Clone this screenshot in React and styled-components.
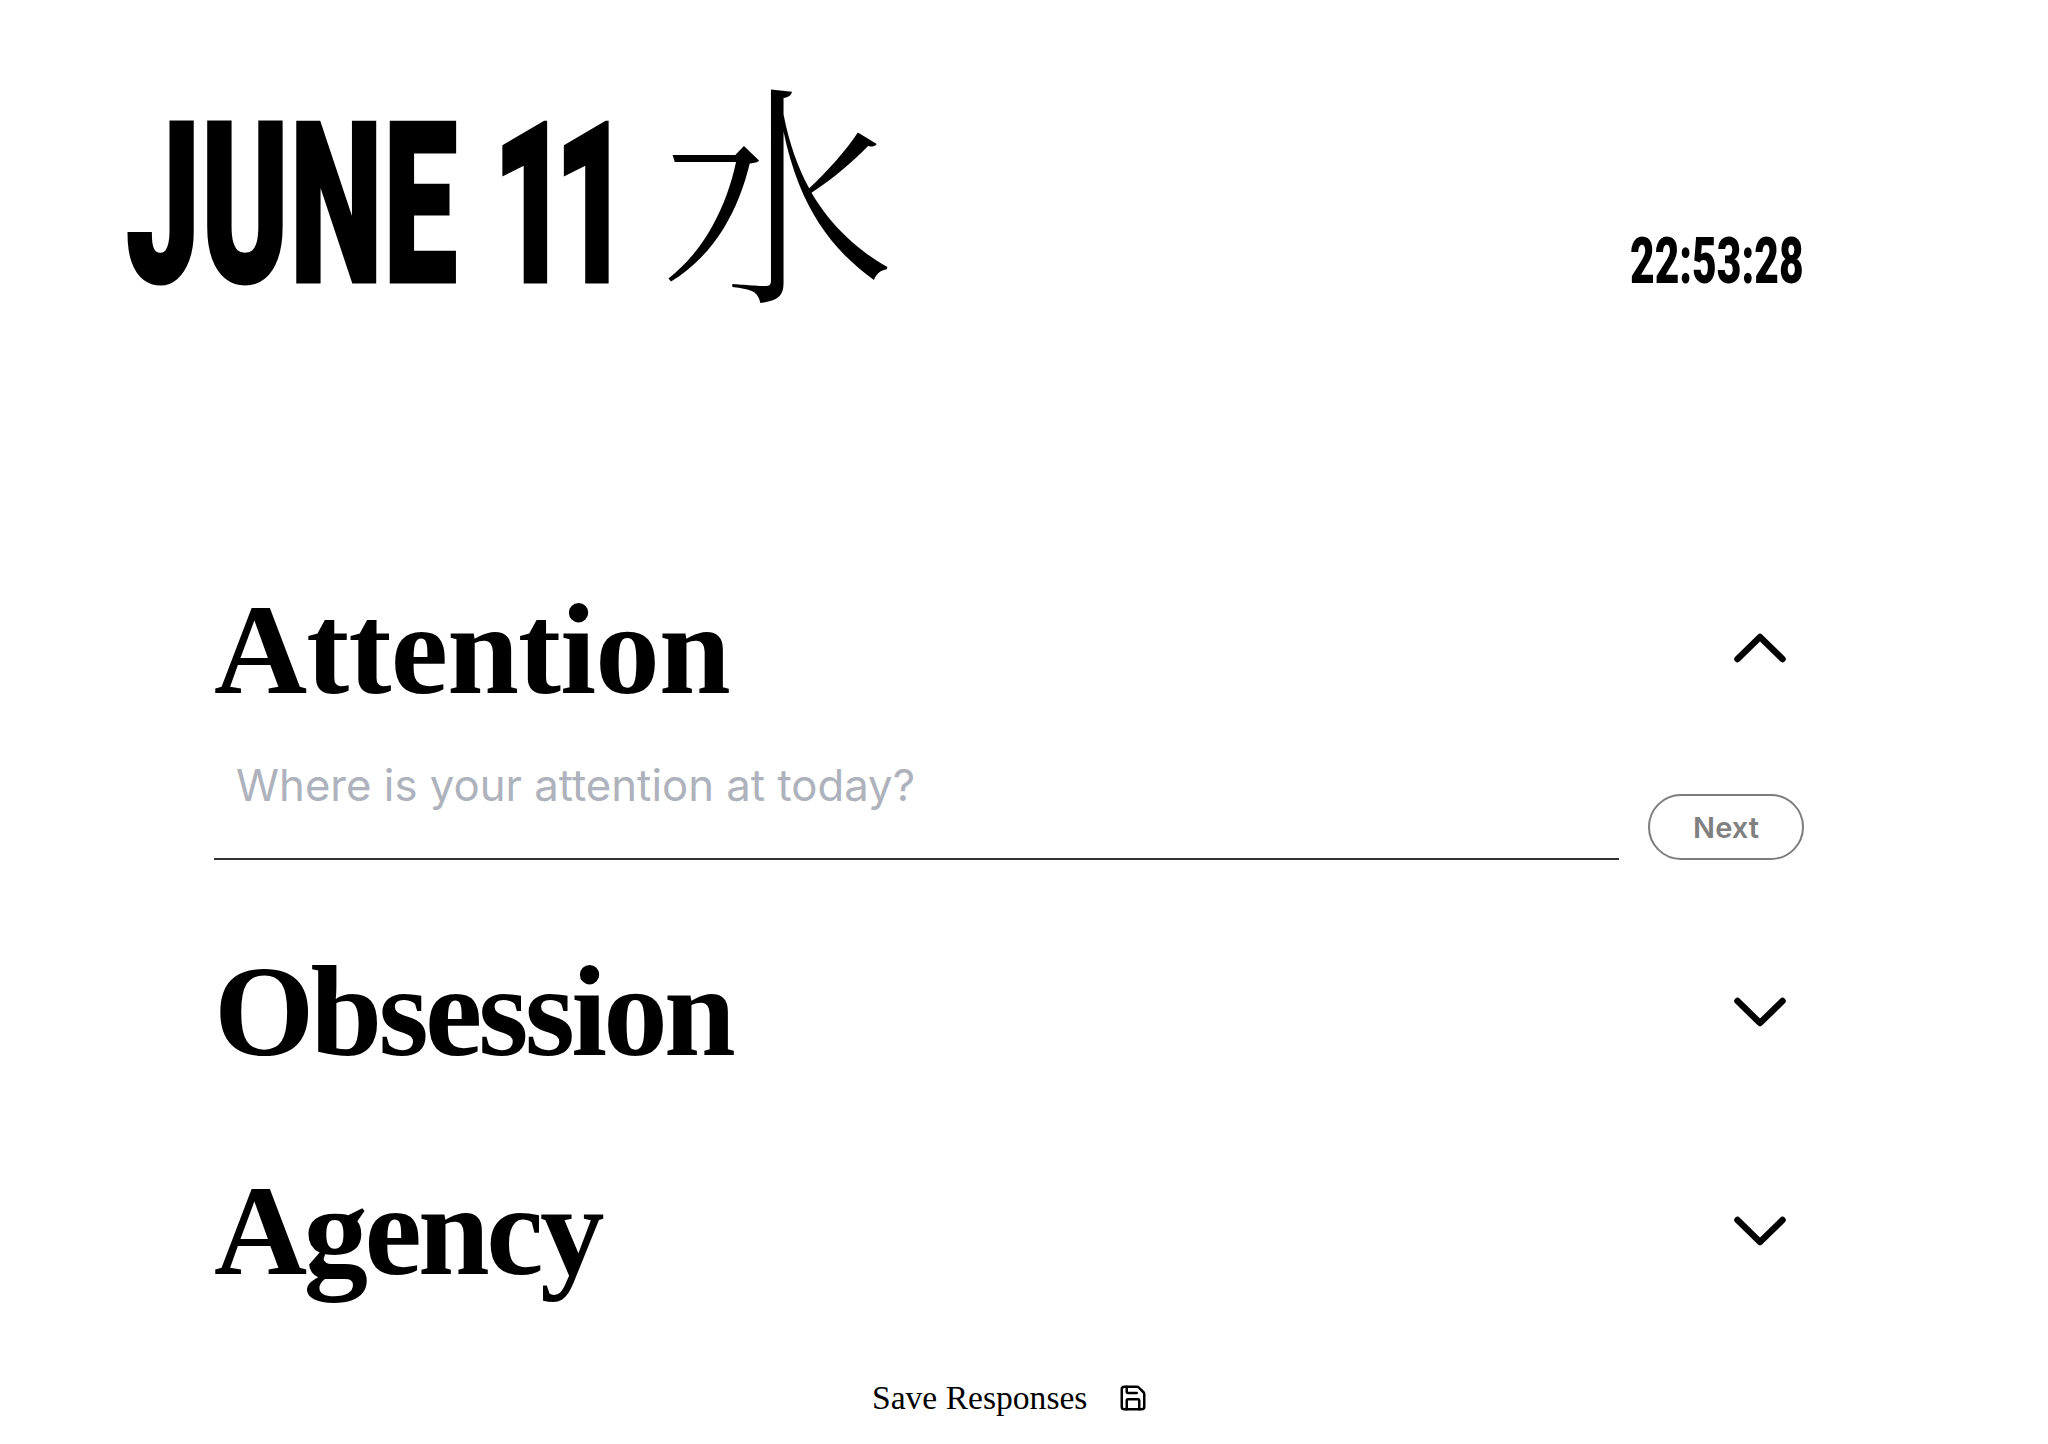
import React from 'react';
import styled, { createGlobalStyle } from 'styled-components';
import { Save } from 'lucide-react';

const GlobalStyle = createGlobalStyle`
  html, body {
    margin: 0;
    padding: 0;
    background: #ffffff;
    color: #000000;
  }
  * { box-sizing: border-box; }
`;

const Page = styled.div`
  width: 2048px;
  height: 1444px;
  overflow: hidden;
  padding: 0 232px 0 129px;
  display: flex;
  flex-direction: column;
`;

const Header = styled.header`
  flex: none;
  height: 555px;
  padding-top: 75px;
  display: flex;
  justify-content: space-between;
  align-items: flex-start;
`;

const DateRow = styled.div`
  display: flex;
  align-items: flex-start;
  gap: 48px;
`;

const DateBox = styled.div`
  width: 484px;
  height: 218px;
  margin-top: 22px;
`;

const DateText = styled.h1`
  margin: 0 0 0 -3px;
  display: inline-block;
  white-space: nowrap;
  font-family: Roboto, "Liberation Sans", sans-serif;
  font-weight: 900;
  font-size: 224px;
  line-height: 218px;
  letter-spacing: 2px;
  font-kerning: none;
  -webkit-text-stroke: 3px #000;
  transform: scaleX(0.588);
  transform-origin: left center;
`;

const DayNumber = styled.span`
  letter-spacing: -25px;
`;

const Weekday = styled.span`
  display: block;
  font-family: "Noto Serif CJK JP", "Noto Sans CJK JP", sans-serif;
  font-weight: 300;
  font-size: 233px;
  line-height: 218px;
`;

const ClockBox = styled.div`
  width: 174px;
  margin: 157px 12px 0 0;
`;

const Clock = styled.time`
  display: inline-block;
  white-space: nowrap;
  font-family: Roboto, "Liberation Sans", sans-serif;
  font-weight: 900;
  font-size: 64px;
  line-height: 60px;
  transform: scaleX(0.665);
  transform-origin: left center;
`;

const Sections = styled.main`
  flex: none;
  padding: 0 12px 0 85px;
  display: flex;
  flex-direction: column;
`;

const SectionRow = styled.div`
  flex: none;
  height: ${(props) => props.$height}px;
  display: flex;
  justify-content: space-between;
  align-items: flex-start;
`;

const SectionTitle = styled.h2`
  margin: 0;
  font-family: "Liberation Serif", "Times New Roman", serif;
  font-weight: 700;
  font-size: 129px;
  line-height: 190px;
  letter-spacing: ${(props) => props.$tracking}px;
`;

const Toggle = styled.button`
  margin: ${(props) => props.$top}px 17px 0 0;
  padding: 0;
  border: none;
  background: none;
  display: flex;
  cursor: pointer;
`;

const AnswerRow = styled.div`
  flex: none;
  height: 157px;
  margin-top: 15px;
  display: flex;
  align-items: flex-start;
  gap: 29px;
`;

const AnswerInput = styled.input`
  flex: 1;
  height: 100px;
  padding: 0 0 48px 22px;
  border: none;
  border-bottom: 2px solid #333333;
  outline: none;
  background: none;
  font-family: Inter, sans-serif;
  font-size: 43.7px;
  color: #111111;

  &::placeholder {
    color: #aeb2bc;
    opacity: 1;
  }
`;

const NextButton = styled.button`
  width: 156px;
  height: 66px;
  margin-top: 34px;
  padding: 0;
  border: 2px solid #7d7d7d;
  border-radius: 33px;
  background: #ffffff;
  font-family: Inter, sans-serif;
  font-weight: 600;
  font-size: 29px;
  color: #808080;
  cursor: pointer;
`;

const SaveBar = styled.button`
  flex: none;
  align-self: flex-start;
  margin: auto 0 25px 743px;
  padding: 0;
  border: none;
  background: none;
  display: flex;
  align-items: center;
  gap: 31px;
  font-family: "Liberation Serif", "Times New Roman", serif;
  font-size: 33.6px;
  line-height: 42px;
  color: #000000;
  cursor: pointer;
`;

const Chevron = ({ up }) => (
  <svg width="54" height="30" viewBox="0 0 54 30" fill="none" stroke="#000" strokeWidth="6.5" strokeLinecap="round" strokeLinejoin="round">
    <path d={up ? 'M4.5 26 L27 4 L49.5 26' : 'M4.5 4 L27 26 L49.5 4'} />
  </svg>
);

export default function App() {
  return (
    <Page>
      <GlobalStyle />
      <Header>
        <DateRow>
          <DateBox>
            <DateText>JUNE <DayNumber>1</DayNumber>1</DateText>
          </DateBox>
          <Weekday>水</Weekday>
        </DateRow>
        <ClockBox>
          <Clock>22:53:28</Clock>
        </ClockBox>
      </Header>
      <Sections>
        <SectionRow $height={190}>
          <SectionTitle $tracking={-0.8}>Attention</SectionTitle>
          <Toggle $top={78} aria-label="Collapse">
            <Chevron up />
          </Toggle>
        </SectionRow>
        <AnswerRow>
          <AnswerInput placeholder="Where is your attention at today?" />
          <NextButton>Next</NextButton>
        </AnswerRow>
        <SectionRow $height={219}>
          <SectionTitle $tracking={-3.8}>Obsession</SectionTitle>
          <Toggle $top={80} aria-label="Expand">
            <Chevron />
          </Toggle>
        </SectionRow>
        <SectionRow $height={190}>
          <SectionTitle $tracking={-3.6}>Agency</SectionTitle>
          <Toggle $top={80} aria-label="Expand">
            <Chevron />
          </Toggle>
        </SectionRow>
      </Sections>
      <SaveBar>
        Save Responses
        <Save size={30} strokeWidth={2} />
      </SaveBar>
    </Page>
  );
}
